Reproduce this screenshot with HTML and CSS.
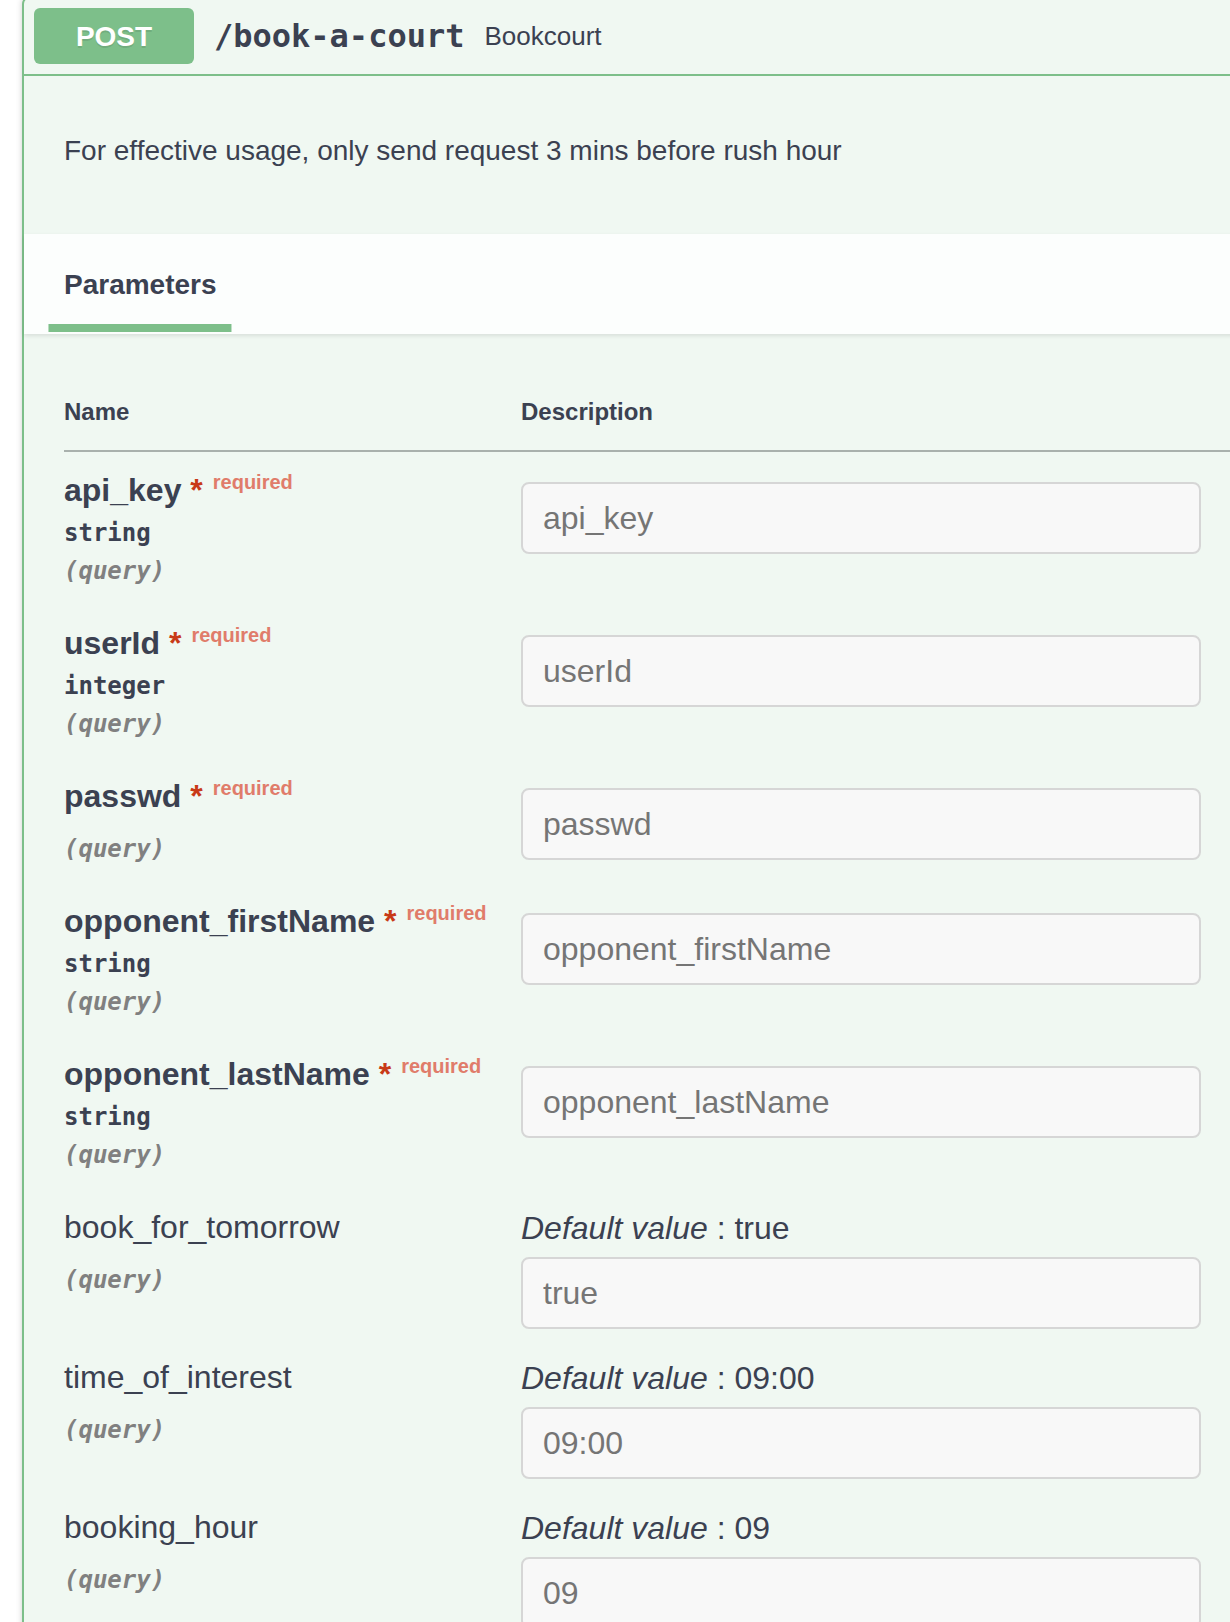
FILE: index.html
```html
<!DOCTYPE html>
<html lang="en">
<head>
<meta charset="utf-8">
<title>POST /book-a-court</title>
<link rel="stylesheet" href="styles.css">
</head>
<body>
<div class="wrapper">
  <div class="opblock">
    <div class="summary">
      <span class="method">POST</span>
      <span class="path">/book-a-court</span>
      <span class="summary-desc">Bookcourt</span>
    </div>
    <div class="body">
      <div class="desc-wrapper">
        <p class="desc">For effective usage, only send request 3 mins before rush hour</p>
      </div>
      <div class="section-header">
        <div class="tab-item"><h4><span class="tab-label">Parameters</span></h4></div>
      </div>
      <div class="table-container">
        <table class="params">
          <thead>
            <tr>
              <th class="col-name">Name</th>
              <th class="col-desc">Description</th>
            </tr>
          </thead>
          <tbody>
            <tr>
              <td class="col-name">
                <div class="param-name required">api_key<span class="star">&nbsp;*</span><span class="req">required</span></div>
                <div class="param-type">string</div>
                <div class="param-in">(query)</div>
              </td>
              <td class="col-desc"><input class="field" type="text" placeholder="api_key"></td>
            </tr>
            <tr>
              <td class="col-name">
                <div class="param-name required">userId<span class="star">&nbsp;*</span><span class="req">required</span></div>
                <div class="param-type">integer</div>
                <div class="param-in">(query)</div>
              </td>
              <td class="col-desc"><input class="field" type="text" placeholder="userId"></td>
            </tr>
            <tr>
              <td class="col-name">
                <div class="param-name required">passwd<span class="star">&nbsp;*</span><span class="req">required</span></div>
                <div class="param-type"></div>
                <div class="param-in">(query)</div>
              </td>
              <td class="col-desc"><input class="field" type="text" placeholder="passwd"></td>
            </tr>
            <tr>
              <td class="col-name">
                <div class="param-name required">opponent_firstName<span class="star">&nbsp;*</span><span class="req">required</span></div>
                <div class="param-type">string</div>
                <div class="param-in">(query)</div>
              </td>
              <td class="col-desc"><input class="field" type="text" placeholder="opponent_firstName"></td>
            </tr>
            <tr>
              <td class="col-name">
                <div class="param-name required">opponent_lastName<span class="star">&nbsp;*</span><span class="req">required</span></div>
                <div class="param-type">string</div>
                <div class="param-in">(query)</div>
              </td>
              <td class="col-desc"><input class="field" type="text" placeholder="opponent_lastName"></td>
            </tr>
            <tr>
              <td class="col-name">
                <div class="param-name">book_for_tomorrow</div>
                <div class="param-type"></div>
                <div class="param-in">(query)</div>
              </td>
              <td class="col-desc">
                <div class="default"><i>Default value</i> : true</div>
                <input class="field" type="text" placeholder="true">
              </td>
            </tr>
            <tr>
              <td class="col-name">
                <div class="param-name">time_of_interest</div>
                <div class="param-type"></div>
                <div class="param-in">(query)</div>
              </td>
              <td class="col-desc">
                <div class="default"><i>Default value</i> : 09:00</div>
                <input class="field" type="text" placeholder="09:00">
              </td>
            </tr>
            <tr>
              <td class="col-name">
                <div class="param-name">booking_hour</div>
                <div class="param-type"></div>
                <div class="param-in">(query)</div>
              </td>
              <td class="col-desc">
                <div class="default"><i>Default value</i> : 09</div>
                <input class="field" type="text" placeholder="09">
              </td>
            </tr>
          </tbody>
        </table>
      </div>
    </div>
  </div>
</div>
</body>
</html>
```
FILE: styles.css
```css
html, body {
  margin: 0;
  padding: 0;
  overflow: hidden;
  background: #ffffff;
}

body {
  font-family: "Liberation Sans", Arial, sans-serif;
  color: #3b4151;
}

.wrapper {
  padding-left: 22px;
}

.opblock {
  margin-top: -4px;
  width: 1400px;
  border: 2px solid #7dbf8a;
  border-radius: 8px;
  background: #f0f8f2;
  box-shadow: 0 0 6px rgba(0, 0, 0, 0.19);
}

.summary {
  display: flex;
  align-items: center;
  padding: 10px;
  border-bottom: 2px solid #7dbf8a;
}

.method {
  min-width: 160px;
  padding: 13px 0 11px;
  font-size: 28px;
  line-height: 32px;
  font-weight: 700;
  text-align: center;
  color: #ffffff;
  background: #7dbf8a;
  border-radius: 6px;
  text-shadow: 0 2px 0 rgba(0, 0, 0, 0.1);
}

.path {
  padding: 0 20px;
  font-family: "DejaVu Sans Mono", "Liberation Mono", monospace;
  font-size: 32px;
  font-weight: 700;
  color: #3b4151;
}

.summary-desc {
  font-size: 26px;
  color: #3b4151;
}

.desc-wrapper {
  padding: 30px 40px;
  margin-bottom: 10px;
}

.desc {
  margin: 29px 0 27px;
  font-size: 28px;
  color: #3b4151;
}

.section-header {
  display: flex;
  align-items: center;
  box-sizing: border-box;
  min-height: 100px;
  padding: 16px 40px;
  background: rgba(255, 255, 255, 0.8);
  box-shadow: 0 2px 4px rgba(0, 0, 0, 0.1);
}

.tab-item h4 {
  margin: 0;
  padding-top: 2px;
  font-size: 28px;
  line-height: 32px;
  font-weight: 700;
  color: #3b4151;
}

.tab-label {
  position: relative;
  display: inline-block;
}

.tab-label::after {
  content: "";
  position: absolute;
  left: 50%;
  bottom: -31px;
  width: 120%;
  height: 8px;
  transform: translateX(-50%);
  background: #7dbf8a;
}

.table-container {
  padding: 40px;
}

.params {
  width: 100%;
  border-collapse: collapse;
}

.params th {
  padding: 24px 0;
  font-size: 24px;
  line-height: 28px;
  font-weight: 700;
  text-align: left;
  color: #3b4151;
  border-bottom: 2px solid #a9b1ad;
}

.params th.col-name {
  width: 457px;
}

.params td {
  padding: 20px 0 0 0;
  vertical-align: top;
}

.param-name {
  font-size: 32px;
  line-height: 37px;
  font-weight: 400;
  color: #3b4151;
  white-space: nowrap;
}

.param-name.required {
  font-weight: 700;
}

.star {
  color: #c83a17;
}

.req {
  display: inline-block;
  padding: 0 10px;
  font-size: 20px;
  line-height: 20px;
  font-weight: 700;
  color: #e07c6a;
  vertical-align: 12px;
}

.param-type {
  padding: 10px 0;
  font-family: "DejaVu Sans Mono", "Liberation Mono", monospace;
  font-size: 24px;
  line-height: 28px;
  font-weight: 700;
  color: #3b4151;
}

.param-type:empty {
  height: 0;
}

.param-in {
  padding-bottom: 20px;
  font-family: "DejaVu Sans Mono", "Liberation Mono", monospace;
  font-size: 24px;
  line-height: 28px;
  font-weight: 700;
  font-style: italic;
  color: #808080;
}

.default {
  font-size: 32px;
  line-height: 38px;
  color: #3b4151;
}

.field {
  display: block;
  box-sizing: border-box;
  width: 680px;
  height: 72px;
  margin: 10px 0;
  padding: 0 20px;
  font-family: "Liberation Sans", Arial, sans-serif;
  font-size: 32px;
  color: #3b4151;
  background: #f8f8f8;
  border: 2px solid #d6d6d6;
  border-radius: 8px;
  outline: none;
}

.field::placeholder {
  color: #757575;
}
```
